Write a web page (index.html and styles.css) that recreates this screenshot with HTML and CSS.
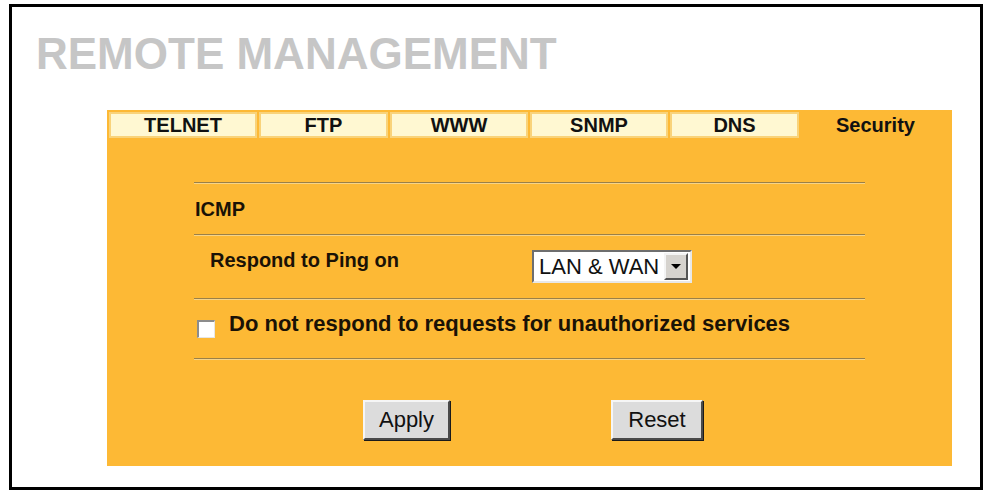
FILE: index.html
```html
<!DOCTYPE html>
<html>
<head>
<meta charset="utf-8">
<link rel="stylesheet" href="styles.css">
</head>
<body>
<div class="frame">
  <h1 class="title">REMOTE MANAGEMENT</h1>
  <div class="panel">
    <div class="tabs">
      <div class="tab">TELNET</div>
      <div class="tab">FTP</div>
      <div class="tab">WWW</div>
      <div class="tab">SNMP</div>
      <div class="tab">DNS</div>
      <div class="tab active">Security</div>
    </div>
    <div class="content">
      <div class="sep"></div>
      <div class="row row-icmp"><span class="heading">ICMP</span></div>
      <div class="sep"></div>
      <div class="row row-ping">
        <span class="label">Respond to Ping on</span>
        <div class="select">
          <span class="select-text">LAN &amp; WAN</span>
          <span class="select-btn"><span class="arrow"></span></span>
        </div>
      </div>
      <div class="sep"></div>
      <div class="row row-check">
        <span class="checkbox"></span>
        <span class="check-label">Do not respond to requests for unauthorized services</span>
      </div>
      <div class="sep"></div>
      <div class="buttons">
        <span class="btn btn-apply">Apply</span>
        <span class="btn btn-reset">Reset</span>
      </div>
    </div>
  </div>
</div>
</body>
</html>
```
FILE: styles.css
```css
html, body {
  margin: 0;
  padding: 0;
  background: #ffffff;
  overflow: hidden;
}
body {
  font-family: "Liberation Sans", Arial, sans-serif;
  color: #1a1206;
}
.frame {
  margin: 4px 0 0 9px;
  width: 974px;
  height: 486px;
  border: 3px solid #000;
  box-sizing: border-box;
  overflow: hidden;
}
.title {
  margin: 25px 0 0 24px;
  font-size: 44px;
  line-height: 44px;
  font-weight: bold;
  color: #c6c6c6;
}
.panel {
  margin: 34px 0 0 95px;
  width: 845px;
  height: 356px;
  background: #fdb935;
  box-sizing: border-box;
  padding: 2px 2px 0 2px;
}
.tabs {
  display: grid;
  grid-template-columns: 148px 129px 138px 138px 129px 1fr;
  column-gap: 2px;
  height: 26px;
}
.tab {
  background: #fff8d2;
  border: 2px solid #f9d37a;
  box-sizing: border-box;
  text-align: center;
  font-weight: bold;
  font-size: 20px;
  line-height: 22px;
  color: #111;
}
.tab.active {
  background: transparent;
  border-color: transparent;
}
.content {
  padding: 44px 85px 0 85px;
}
.sep {
  border-top: 1px solid #9a8048;
  border-bottom: 1px solid #f7d488;
}
.row {
  display: flex;
  align-items: flex-start;
}
.row-icmp {
  height: 50px;
}
.heading {
  margin: 14px 0 0 1px;
  font-weight: bold;
  font-size: 20px;
  line-height: 23px;
}
.row-ping {
  height: 62px;
}
.label {
  width: 338px;
  box-sizing: border-box;
  padding-left: 16px;
  margin-top: 13px;
  font-weight: bold;
  font-size: 20px;
  line-height: 23px;
}
.select {
  margin-top: 14px;
  width: 160px;
  height: 33px;
  box-sizing: border-box;
  background: #fff;
  border-top: 2px solid #6e6e6e;
  border-left: 2px solid #6e6e6e;
  border-right: 2px solid #e8e8e8;
  border-bottom: 2px solid #e8e8e8;
  display: flex;
  align-items: center;
  justify-content: space-between;
  padding: 1px 2px 1px 5px;
}
.select-text {
  font-size: 22px;
  line-height: 25px;
  color: #111;
}
.select-btn {
  width: 24px;
  height: 27px;
  box-sizing: border-box;
  background: #d6d3ce;
  border-top: 2px solid #f4f4f4;
  border-left: 2px solid #f4f4f4;
  border-right: 2px solid #555;
  border-bottom: 2px solid #555;
  display: flex;
  align-items: center;
  justify-content: center;
}
.arrow {
  width: 0;
  height: 0;
  border-left: 5px solid transparent;
  border-right: 5px solid transparent;
  border-top: 5px solid #000;
}
.row-check {
  height: 58px;
}
.checkbox {
  margin: 20px 0 0 3px;
  width: 18px;
  height: 18px;
  box-sizing: border-box;
  background: #fff;
  border-top: 2px solid #8c8c8c;
  border-left: 2px solid #8c8c8c;
  border-right: 1px solid #e6e6e6;
  border-bottom: 1px solid #e6e6e6;
  flex: none;
}
.check-label {
  margin: 11px 0 0 14px;
  font-weight: bold;
  font-size: 22px;
  line-height: 25px;
  white-space: nowrap;
}
.buttons {
  display: flex;
  padding-top: 40px;
}
.btn {
  height: 40px;
  box-sizing: border-box;
  background: #dcdcdc;
  border-top: 2px solid #f6f6f6;
  border-left: 2px solid #f6f6f6;
  border-right: 2px solid #4a4a4a;
  border-bottom: 2px solid #4a4a4a;
  box-shadow: 1px 1px 0 #1a1a1a;
  display: flex;
  align-items: center;
  justify-content: center;
  font-size: 22px;
  color: #111;
}
.btn-apply {
  width: 87px;
  margin-left: 169px;
}
.btn-reset {
  width: 92px;
  margin-left: 161px;
}
```
